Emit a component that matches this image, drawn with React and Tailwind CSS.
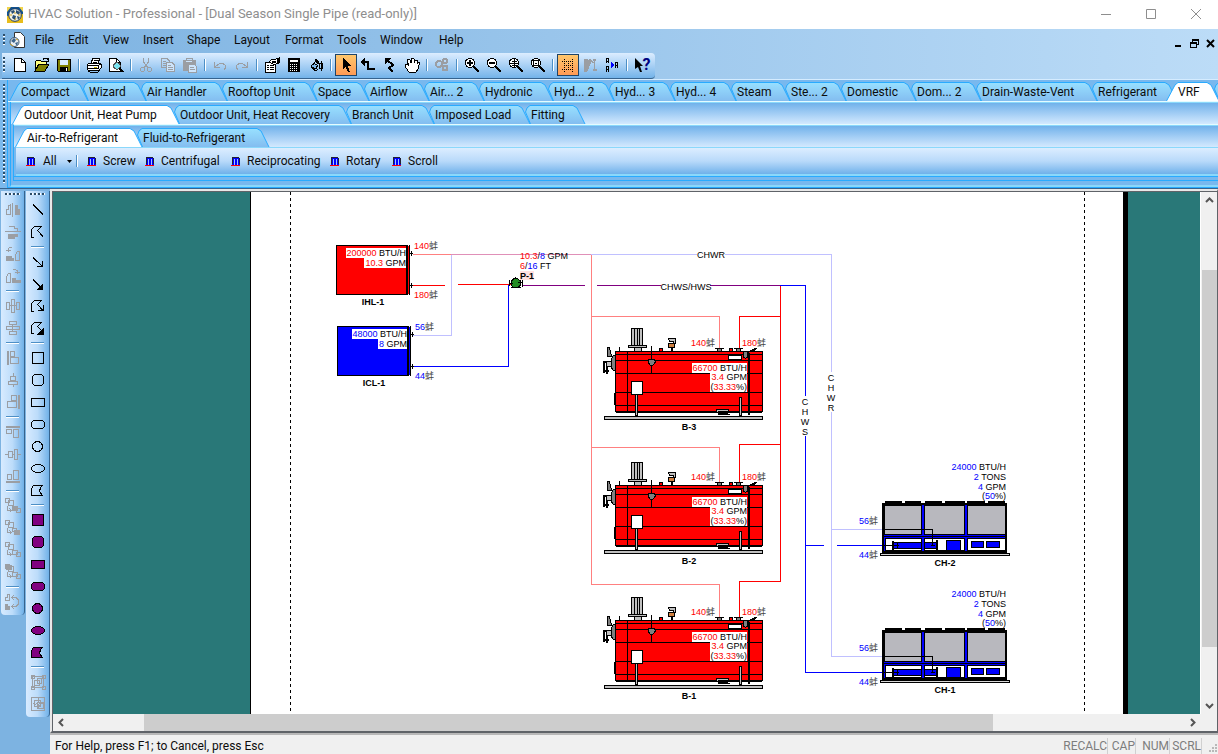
import { Fragment } from 'react';
import clsx from 'clsx';

const MENUS = [
    { label: 'File', width: 33 },
    { label: 'Edit', width: 35 },
    { label: 'View', width: 40 },
    { label: 'Insert', width: 44 },
    { label: 'Shape', width: 47 },
    { label: 'Layout', width: 51 },
    { label: 'Format', width: 52 },
    { label: 'Tools', width: 43 },
    { label: 'Window', width: 59 },
    { label: 'Help', width: 40 },
];

const CATEGORY_TABS = [
    { label: 'Compact', width: 68 },
    { label: 'Wizard', width: 58 },
    { label: 'Air Handler', width: 81 },
    { label: 'Rooftop Unit', width: 90 },
    { label: 'Space', width: 52 },
    { label: 'Airflow', width: 60 },
    { label: 'Air... 2', width: 55 },
    { label: 'Hydronic', width: 69 },
    { label: 'Hyd... 2', width: 61 },
    { label: 'Hyd... 3', width: 61 },
    { label: 'Hyd... 4', width: 61 },
    { label: 'Steam', width: 54 },
    { label: 'Ste... 2', width: 56 },
    { label: 'Domestic', width: 70 },
    { label: 'Dom... 2', width: 65 },
    { label: 'Drain-Waste-Vent', width: 116 },
    { label: 'Refrigerant', width: 80 },
    { label: 'VRF', width: 42, active: true },
];

const UNIT_TABS = [
    { label: 'Outdoor Unit, Heat Pump', width: 156, active: true },
    { label: 'Outdoor Unit, Heat Recovery', width: 172 },
    { label: 'Branch Unit', width: 83 },
    { label: 'Imposed Load', width: 96 },
    { label: 'Fitting', width: 55 },
];

const TYPE_TABS = [
    { label: 'Air-to-Refrigerant', width: 116, active: true },
    { label: 'Fluid-to-Refrigerant', width: 127 },
];

const COMPRESSORS = [
    { label: 'Screw', width: 58 },
    { label: 'Centrifugal', width: 86 },
    { label: 'Reciprocating', width: 99 },
    { label: 'Rotary', width: 62 },
    { label: 'Scroll', width: 60 },
];

// 16x16 pixel icon
const Icon = ({ children }) => (
    <svg width="16" height="16" viewBox="0 0 16 16" fill="none" stroke="currentColor" shapeRendering="crispEdges" aria-hidden="true">
        {children}
    </svg>
);

const GlobeIcon = ({ size = 16 }) => (
    <svg width={size} height={size} viewBox="0 0 16 16" aria-hidden="true">
        <path d="M0 0H16V7L0 9Z" fill="#12518f" />
        <path d="M0 9L16 7V16H0Z" fill="#e8bd1c" />
        <path d="M0 0h4L0 5zM12 0h4v5z" fill="#f1d34b" />
        <circle cx="8" cy="8" r="6.3" fill="#f2f2e8" stroke="#18395e" />
        <path d="M4 4l3-1 1 2-3 2zM9 3l4 2-1 3-3-2zM6 8l3 1-1 4-3-2zM10 9l3 1-2 3z" fill="#2b4f74" />
        <path d="M2 8h3M7 6h2M11 8h3M8 13l1-2" stroke="#d4a724" />
    </svg>
);

const ICONS = {
    new: <><path d="M2.500 1.500H9.500L13.500 5.500V14.500H2.500Z" fill="#fff" /><path d="M9.500 1.500V5.500H13.500" /></>,
    open: <><path d="M1 13V4h1l1-1h3l1 1h5v3H5l-4 6" fill="#ffff80" /><path d="M1 14L5 7H15L11 14Z" fill="#808000" /><path d="M9 2.500L10.500 1H12.500L14.500 3.500M14.500 1V4H12" /></>,
    save: <><path d="M1.500 2.500H14.500V14.500H2.500L1.500 13.500Z" fill="#808000" /><path d="M4 3H12V8H4Z" fill="#d8ebff" stroke="none" /><path d="M4 10H12V15H4Z" fill="#000" stroke="none" /><path d="M10 11h1v3h-1z" fill="#fff" stroke="none" /></>,
    print: <><path d="M5 6L7 1H14L12 6" fill="#fff" /><path d="M7.500 3.500H12M6.500 5H11" /><path d="M1 8L3 6H14L15 7V11L13 13H2L1 12Z" fill="#fff" /><path d="M1 8.500H12L15 7M1 11H12.500V8.500M2 13.500L4 15H12L14.500 11.500" /><path d="M8 10h3" stroke="#c8b400" /></>,
    preview: <><path d="M1.500 1.500H8.500L12.500 5.500V14.500H1.500Z" fill="#fff" /><path d="M8.500 1.500V5.500H12.500" /><circle cx="9" cy="9" r="3.200" fill="#7be4f0" stroke="#555" /><path d="M11.500 11.500L15.500 15" strokeWidth="2" /></>,
    cut: <><path d="M5.500 1V5L10 11M10.500 1V5L6 11" /><circle cx="4.500" cy="12.500" r="2" /><circle cx="11.500" cy="12.500" r="2" /></>,
    copy: <><path d="M1.500 1.500H7L9.500 4V10.500H1.500Z" /><path d="M3 4.500H6M3 6.500H6M3 8.500H6" /><path d="M6.500 5.500H12L14.500 8V14.500H6.500Z" fill="#cde4fb" /><path d="M8 8.500H11M8 10.500H13M8 12.500H13" /></>,
    paste: <><path d="M1 3H13V13H1Z" fill="currentColor" /><path d="M4 3V1.500H10V3" /><path d="M4 4.500H10" stroke="#cde4fb" /><path d="M6.500 7.500H12.500L14.500 9.500V15.500H6.500Z" fill="#cde4fb" /><path d="M8 10.500H12M8 12.500H13" /></>,
    undo: <><path d="M2.500 5V10.500H8M3 10L6 7.500L8 6.500H11L13.500 8.500V11L12 12.500" /></>,
    redo: <><path d="M13.500 5V10.500H8M13 10L10 7.500L8 6.500H5L2.500 8.500V11L4 12.500" /></>,
    props: <><path d="M1.500 5.500H11.500V15.500H1.500Z" fill="#fff" /><path d="M3 8.500H5M6 8.500H10M3 10.500H5M6 10.500H10M3 12.500H5M6 12.500H10" /><path d="M5 5L8 2H12L15 1V6L12 7H9L7 6Z" fill="#fff" /><path d="M8 4.500H12M14 1V7" strokeWidth="2" /></>,
    calc: <><path d="M2 1H14V15H2Z" fill="#000" stroke="none" /><path d="M4 3H12V5H4Z" fill="#fff" stroke="none" /><path d="M4 7.500H12M4 9.500H12M4 11.500H12M4 13.500H12" stroke="#fff" strokeDasharray="1 1" /></>,
    rotate: <><path d="M3.500 8.500L6 6.500L9.500 8.500L8 11.500L4 10.500Z" fill="#7db8ec" /><path d="M7.500 2L10.500 5M6 6L9 3M4 11L8 14L10 12" /><path d="M7 2.500L11 7" strokeWidth="2" /><path d="M11.500 6.500H14.500V11.500H11.500ZM13 4V14" /></>,
    pointer: <path d="M5 1V12L7.500 9.500L10 15H12L9.500 9H13Z" fill="#000" stroke="none" />,
    connector: <><path d="M2 5H8V11.500H15" strokeWidth="2" /><path d="M0 5L5 1V9Z" fill="#000" stroke="none" /></>,
    zigzag: <><path d="M11 14.500L7 11L11 8L5 3" strokeWidth="2" /><path d="M3 1H9L3 7Z" fill="#000" stroke="none" /></>,
    hand: <><path d="M4 14L1 9L1 7L3 7L5 9L3 4L4 2L6 3L7 6V2L9 1L10 2V6L11 3L13 3V7L14 5L15.500 6L14 12L12 15H5Z" fill="#fff" /></>,
    gears: <><circle cx="5" cy="7" r="3" strokeWidth="2" /><circle cx="11" cy="4" r="2" strokeWidth="2" /><circle cx="11" cy="11" r="2.500" strokeWidth="2" /></>,
    zoomIn: <><circle cx="6" cy="6" r="4.700" fill="#fff" /><path d="M3 6H9M6 3V9" strokeWidth="2" /><path d="M10 10L15 15" strokeWidth="2.500" /></>,
    zoomOut: <><circle cx="6" cy="6" r="4.700" fill="#fff" /><path d="M3 6H9" strokeWidth="2" /><path d="M10 10L15 15" strokeWidth="2.500" /></>,
    zoomPage: <><circle cx="6" cy="6" r="4.700" fill="#fff" /><path d="M1.500 6.500H11M6.500 1.500V11M4 4.500H9M4 8.500H9" /><path d="M10 10L15 15" strokeWidth="2.500" /></>,
    zoomFit: <><circle cx="6" cy="6" r="4.700" fill="#fff" /><path d="M3.500 3.500H8.500V8.500H3.500ZM5 6H7" /><path d="M10 10L15 15" strokeWidth="2.500" /></>,
    grid: <path d="M2 4.500H14M2 12.500H14M4.500 2V15M12.500 2V15M4 8.500H13M8.500 4V13" stroke="#000" strokeDasharray="1 1" />,
    mirror: <><path d="M2 2H5V5L8 3V7L5 14H2Z" fill="currentColor" /><path d="M8 2L11 6M12.500 3V14M10.500 3H14M11 13H15" strokeWidth="1.500" /></>,
    align: <><path d="M2.500 2V6M4.500 2V6M2 1.500H5M2 4.500H5M2.500 10V15M4.500 10V15M2 9.500H5M2 12.500H5M11.500 6V11M13.500 6V11M11 5.500H14M11 8.500H14" /><path d="M7 5L11 8L7 11Z" fill="#0000ff" stroke="none" /></>,
    help: <path d="M1 1V12L4 10L6 15H8L6 9H9Z" fill="#000" stroke="none" />,
};

const MAIN_TOOLS = [
    [['new', 'New'], ['open', 'Open'], ['save', 'Save']],
    [['print', 'Print'], ['preview', 'Print Preview']],
    [['cut', 'Cut', 'off'], ['copy', 'Copy', 'off'], ['paste', 'Paste', 'off']],
    [['undo', 'Undo', 'off'], ['redo', 'Redo', 'off']],
    [['props', 'Properties'], ['calc', 'Calculate'], ['rotate', 'Rotate']],
    [['pointer', 'Select', 'on'], ['connector', 'Connector'], ['zigzag', 'Direct Connector'], ['hand', 'Pan']],
    [['gears', 'Options', 'off']],
    [['zoomIn', 'Zoom In'], ['zoomOut', 'Zoom Out'], ['zoomPage', 'Zoom Page'], ['zoomFit', 'Zoom Fit']],
    [['grid', 'Grid', 'on'], ['mirror', 'Mirror', 'off'], ['align', 'Sequence']],
    [['help', 'Context Help']],
];

const STACK = <path d="M0.500 0.500H4.500V4.500H0.500ZM3.500 2.500H8.500V7.500H3.500Z" />;
const STACK_ARROW = <path d="M2.500 8V12.500H6M4.500 10.500L6.500 12.500L4.500 14.500" />;

const ARRANGE_TOOLS = [
    [
        ['Flip Horizontal', <><path d="M7.500 1V15" /><path d="M10 3H12V7H14V12H10Z" fill="currentColor" /><path d="M5.500 3V12.500H1.500V7.500H3.500V3.500Z" /></>],
        ['Flip Vertical', <><path d="M0 7.500H16M3.500 2.500H9V4.500H12V7" /><path d="M3 10H12V12H9V14H3Z" fill="currentColor" /></>],
        ['Rotate Left', <><path d="M7 1H5L3.500 3V6M1 4.500H6" /><path d="M1 10H6V12H8V14H1Z" fill="currentColor" /><path d="M10.500 14.500V8.500L12.500 5.500H14.500V14.500Z" /></>],
        ['Rotate Right', <><path d="M8 1H10L12.500 3V6M10 4.500H15" /><path d="M7 10H10V12H15V14H7Z" fill="currentColor" /><path d="M1.500 14.500V8.500L3.500 5.500H5.500V14.500Z" /></>],
    ],
    [
        ['Space Across', <path d="M1.500 4.500H4.500V11.500H1.500ZM6.500 1.500H9.500V14.500H6.500ZM11.500 4.500H14.500V11.500H11.500ZM4 7.500H12" />],
        ['Space Down', <path d="M4.500 1.500H11.500V4.500H4.500ZM1.500 6.500H14.500V9.500H1.500ZM4.500 11.500H11.500V14.500H4.500ZM7.500 4V12" />],
    ],
    [
        ['Align Left', <><path d="M3 1V15" strokeWidth="2" /><path d="M5.500 1.500H9.500V6.500H5.500ZM5.500 7.500H13.500V13.500H5.500Z" /></>],
        ['Align Center', <path d="M8.500 1V4M5.500 4.500H10.500V8.500H5.500ZM3.500 9.500H12.500V12.500H3.500ZM8.500 12V15" />],
        ['Align Right', <><path d="M14 1V15" strokeWidth="2" /><path d="M6.500 1.500H11.500V6.500H6.500ZM2.500 7.500H11.500V13.500H2.500Z" /></>],
    ],
    [
        ['Align Top', <><path d="M1 3H15" strokeWidth="2" /><path d="M1.500 5.500H6.500V9.500H1.500ZM8.500 5.500H13.500V13.500H8.500Z" /></>],
        ['Align Middle', <path d="M0 8.500H3M3.500 5.500H7.500V11.500H3.500ZM9.500 3.500H12.500V13.500H9.500ZM7 8.500H9M13 8.500H16" />],
        ['Align Bottom', <><path d="M1 14H15" strokeWidth="2" /><path d="M2.500 6.500H6.500V11.500H2.500ZM8.500 2.500H13.500V11.500H8.500Z" /></>],
    ],
    [
        ['Bring to Front', <>{STACK}{STACK_ARROW}<path d="M7.500 8.500H12.500V12.500H7.500Z" fill="currentColor" /><path d="M11.500 10.500H15.500V14.500H11.500Z" /></>],
        ['Send to Back', <>{STACK}{STACK_ARROW}<path d="M7.500 8.500H11.500V11.500H7.500Z" /><path d="M9.500 10.500H14.500V14.500H9.500Z" fill="currentColor" /></>],
        ['Bring Forward', <>{STACK}{STACK_ARROW}<path d="M7.500 8.500H12.500V12.500H7.500ZM11.500 10.500H15.500V14.500H11.500Z" /></>],
        ['Send Backward', <>{STACK}{STACK_ARROW}<path d="M1.500 1.500H6.500V5.500H1.500Z" fill="currentColor" /><path d="M7.500 8.500H12.500V12.500H7.500ZM11.500 10.500H15.500V14.500H11.500Z" /></>],
    ],
    [['Swap', <><path d="M0.500 6.500V3.500H2.500V0.500H4.500V6.500Z" /><path d="M0.500 10.500H2.500V12.500H4.500V15H0.500Z" fill="currentColor" /><path d="M7 3.500H11L13.500 6V10L11 12.500H7M9 1L7 3.500L9 6M9 10L7 12.500L9 15" /></>]],
];

const POLY = 'M1.500 13.500V5.500L4.500 2.500H11.500L7.500 6.500';

// The same outlines appear twice on the bar: first hollow, then filled
const shapeTools = (fill) => [
    ['Square', <path d="M2.500 2.500H13.500V13.500H2.500Z" fill={fill} />],
    ['Rounded Square', <path d="M4.500 2.500H11.500L13.500 4.500V11.500L11.500 13.500H4.500L2.500 11.500V4.500Z" fill={fill} />],
    ['Rectangle', <path d="M1.500 4.500H14.500V12.500H1.500Z" fill={fill} />],
    ['Rounded Rectangle', <path d="M3.500 4.500H12.500L14.500 6.500V10.500L12.500 12.500H3.500L1.500 10.500V6.500Z" fill={fill} />],
    ['Circle', <circle cx="7.500" cy="8.500" r="5" fill={fill} />],
    ['Ellipse', <ellipse cx="8" cy="8.500" rx="6.500" ry="4" fill={fill} />],
    ['Closed Curve', <path d="M1.500 13.500V6.500L3.500 3.500H12.500L10.500 5.500L9.500 9.500L12.500 13.500Z" fill={fill} />],
];

const DRAW_TOOLS = [
    [
        ['Line', <path d="M3 2.500L13 12.500" />],
        ['Polyline', <path d={`${POLY}L13 12.500M1.500 13.500H4`} />],
    ],
    [
        ['Arrow', <path d="M3 3.500L12.500 12.500M7 12.500H12.500V7" />],
        ['Filled Arrow', <><path d="M3 3.500L11 11.500" /><path d="M13 7V14H6Z" fill="#000" stroke="none" /></>],
        ['Polyline Arrow', <path d={`${POLY}L13 12.500M1.500 13.500H4M8 12.500H13V7`} />],
        ['Filled Polyline Arrow', <><path d={`${POLY}L12 11M1.500 13.500H4`} /><path d="M14 7V15H6Z" fill="#000" stroke="none" /></>],
    ],
    shapeTools('none'),
    shapeTools('#800080'),
    [
        ['Group', <path d="M2.500 2.500H13.500V13.500H2.500ZM4.500 6.500H9.500V11.500H4.500ZM7.500 4.500H11.500V9.500H7.500ZM1 1H4V4H1ZM12 1H15V4H12ZM1 12H4V15H1ZM12 12H15V15H12Z" />, 'off'],
        ['Ungroup', <><path d="M1.500 1.500H14.500V14.500H1.500ZM4 4H10V10H4ZM7 6H13V12H7ZM4 10L10 4M7 12L13 6" /><path d="M3 7H13M8 2V14" strokeDasharray="2 1" /></>, 'off'],
    ],
];

const Separator = ({ vertical }) =>
    vertical ? (
        <div className="mx-auto my-[3px] h-0.5 w-[13px] border-t border-b border-t-[#4d8fc6] border-b-white" />
    ) : (
        <div className="mx-[3px] h-3 w-0.5 shrink-0 border-r border-l border-r-white border-l-[#4d8fc6]" />
    );

const ToolButton = ({ label, state, children }) => (
    <button
        type="button"
        aria-label={label}
        disabled={state === 'off'}
        className={clsx(
            'flex size-[22px] shrink-0 items-center justify-center',
            state === 'off' ? 'text-[#9b9ea3]' : 'text-black',
            state === 'on' && 'border border-[#1e4468] bg-linear-to-b from-[#ffc76c] to-[#ff9a55]',
        )}
    >
        {children}
    </button>
);

const SideToolbar = ({ groups, allOff, name }) => (
    <div
        role="toolbar"
        aria-label={name}
        className="flex w-6 flex-col items-center self-start rounded-b border-r border-[#36638e] bg-linear-to-r from-[#d8ebff] via-[#bcdcfa] to-[#70b1e8] pb-0.5"
    >
        <div className="mt-0.5 mb-1 h-0.5 w-[15px] bg-[repeating-linear-gradient(90deg,#2b4c68_0_2px,#fff_2px_3px,transparent_3px_4px)]" />
        {groups.map((group, i) => (
            <Fragment key={i}>
                {i > 0 && <Separator vertical />}
                {group.map(([label, icon, state]) => (
                    <ToolButton key={label} label={label} state={allOff ? 'off' : state}>
                        <Icon>{icon}</Icon>
                    </ToolButton>
                ))}
            </Fragment>
        ))}
    </div>
);

// Slanted tab. The feet of neighbouring tabs overlap, so the outline is wider than the button.
const Tab = ({ label, width, active, first }) => {
    const left = first || active ? 'M2.500 19L11 3L14 0.500' : 'M13.500 19L8.500 7L10 3L13 0.500';
    const outline = `${left}H${width + 1}L${width + 5} 3L${width + 13} 19`;
    return (
        <button
            type="button"
            role="tab"
            aria-selected={!!active}
            className={clsx('relative h-[19px] shrink-0 pl-1.5 text-left whitespace-nowrap', active && 'z-10')}
            style={{ width }}
        >
            <svg className="absolute top-0 -left-2" width={width + 15} height="19" aria-hidden="true">
                <path d={outline} fill={active ? '#fff' : 'url(#tabFill)'} stroke="#29abff" />
            </svg>
            <span className="relative">{label}</span>
        </button>
    );
};

const TabRow = ({ tabs, name, children }) => (
    <div role="tablist" aria-label={name} className="flex overflow-hidden pl-[7px]">
        {tabs.map((tab, i) => (
            <Tab key={tab.label} {...tab} first={i === 0} />
        ))}
        {children}
    </div>
);

const CompressorIcon = () => (
    <svg width="10" height="10" viewBox="0 0 10 10" shapeRendering="crispEdges" aria-hidden="true">
        <path d="M1 2H9V9H1Z" fill="#0000ff" />
        <path d="M1 1H8V2H1ZM1 2H2V8H1ZM8 2H9V8H8Z" fill="#223" />
        <path d="M3 3H4V9H3ZM6 3H7V9H6Z" fill="#9fc4ff" />
        <path d="M0 9H9V10H0Z" fill="#ff0000" />
    </svg>
);

const UNIT = '蚌';

const Temp = ({ x, y, color, children, anchor = 'start' }) => (
    <text x={x} y={y} fill={color} textAnchor={anchor}>
        {children}
        <tspan fill="#444">{UNIT}</tspan>
    </text>
);

// Right-aligned reading with a coloured value, e.g. "24000 BTU/H"
const Reading = ({ x, y, value, unit, color, box }) => (
    <>
        {box && <rect x={x - box} y={y - 8} width={box} height="10" fill="#fff" />}
        <text x={x} y={y} textAnchor="end" fill="#000">
            <tspan fill={color}>{value}</tspan> {unit}
        </text>
    </>
);

const Percent = ({ x, y, value, color, box }) => (
    <>
        {box && <rect x={x - box} y={y - 8} width={box} height="10" fill="#fff" />}
        <text x={x} y={y} textAnchor="end">
            (<tspan fill={color}>{value}</tspan>%)
        </text>
    </>
);

const Coil = ({ x, y, color, load, flow, boxes, name }) => (
    <g>
        <g shapeRendering="crispEdges" stroke="#000">
            <rect x={x + 0.5} y={y + 0.5} width="70" height="49" fill={color} />
            <path d={`M${x + 71.5} ${y}V${y + 50}M${x + 73.5} ${y}V${y + 50}`} />
            <path d={`M${x + 72.5} ${y + 1}V${y + 49}`} stroke={color} />
            <path d={`M${x + 74} ${y + 8.5}H${x + 77}M${x + 75.5} ${y + 6}V${y + 11}M${x + 74} ${y + 40.5}H${x + 77}M${x + 75.5} ${y + 38}V${y + 43}`} />
        </g>
        <Reading x={x + 70} y={y + 11} value={load} unit="BTU/H" color={color} box={boxes[0]} />
        <Reading x={x + 70} y={y + 21} value={flow} unit="GPM" color={color} box={boxes[1]} />
        <text x={x + 37} y={y + 60} textAnchor="middle" fontWeight="bold">{name}</text>
    </g>
);

const Boiler = ({ dy, name }) => (
    <g transform={`translate(0 ${dy})`}>
        <g shapeRendering="crispEdges" stroke="#000" fill="#c0c0c0">
            <rect x="604.500" y="416.500" width="158" height="3" />
            {/* stack */}
            <path d="M631.500 328.500H642.500V346H631.500ZM634.500 328V346M639.500 328V346M637.500 328V346" />
            <path d="M628.500 345.500H646.500V347.500H628.500Z" />
            <path d="M634.500 347.500H641.500V351H634.500Z" />
            {/* shell */}
            <rect x="615.500" y="351.500" width="147" height="60" fill="#ff0000" />
            <path d="M616 354.500H762M616 360.500H762M616 373.500H762M616 392.500H762M616 405.500H762M616 412.500H762M627.500 351V412" fill="none" />
            <path d="M619.500 347V351M614.500 393V405" />
            <path d="M749 353V415" strokeWidth="2" />
            <path d="M651.500 346V373" />
            <path d="M649 359.500H654L655.500 362L653 365H650L648 362Z" fill="#808080" />
            <rect x="728.500" y="355.500" width="13" height="4" fill="#fff" />
            <path d="M743.500 351.500H747.500V357L745.500 358.500L743.500 357Z" fill="#808080" />
            <path d="M747 353L751 350.500L757 348M751 351.500L756 349.500" fill="none" />
            {/* nozzles */}
            <path d="M715 348.500H724M717.500 349V351H721.500V349M734 348.500H743M736.500 349V351H740.500V349" fill="#808080" />
            <path d="M729 348H732V351H729ZM659 348H662V351H659Z" fill="#ff0000" />
            {/* relief valve */}
            <path d="M668.500 338.500H675.500V343.500H673.500V341.500H669.500Z" />
            <path d="M668.500 343.500H674.500V347.500H672.500V351H671V347.500H668.500Z" fill="#d08040" />
            {/* burner */}
            <path d="M607.500 347.500H609.500L611.500 356.500H607.500Z" fill="#808080" />
            <path d="M611.500 358.500L613.500 355.500H615V370.500H613.500L611.500 368Z" fill="#808080" />
            <path d="M606.500 361.500H611.500V366.500H606.500Z" />
            <path d="M604 361V373M603 361.500H606M604 370.500H609M606.500 367V374" strokeWidth="2" />
            {/* sight door and legs */}
            <rect x="631.500" y="381.500" width="11" height="13" fill="#fff" />
            <path d="M635.500 395V415.500H637.500V395M739.500 397V415.500H741.500V397Z" />
            <path d="M716.500 409.500H728.500V412.500H716.500ZM718 414H730" />
            <path d="M718 412H728" strokeWidth="3" />
        </g>
        <Reading x={747} y={371} value="66700" unit="BTU/H" color="#ff0000" box={55} />
        <Reading x={747} y={380} value="3.4" unit="GPM" color="#ff0000" box={37} />
        <Percent x={747} y={390} value="33.33" color="#ff0000" box={37} />
        <Temp x={691} y={346} color="#ff0000">140</Temp>
        <Temp x={742} y={346} color="#ff0000">180</Temp>
        <text x="689" y="430" textAnchor="middle" fontWeight="bold">{name}</text>
    </g>
);

const Chiller = ({ dy, name }) => (
    <g transform={`translate(0 ${dy})`}>
        <g shapeRendering="crispEdges" stroke="#000">
            <path d="M885 502H902M905 502H921M925 502H942M945 502H965M967 502H985M988 502H1005" strokeWidth="2" />
            <rect x="883" y="504" width="123" height="48" fill="#0000ff" strokeWidth="2" />
            <path d="M884.500 505.500H921.500V534.500H884.500ZM924.500 505.500H964.500V534.500H924.500ZM967.500 505.500H1005.500V534.500H967.500Z" fill="#b8b8be" />
            <path d="M883 536.500H1006" />
            <path d="M885.500 538.500H921.500V550.500H885.500ZM924.500 538.500H964.500V550.500H924.500ZM967.500 538.500H1005.500V550.500H967.500Z" fill="#fff" />
            <path d="M893.500 542.500H921.500V548.500H893.500ZM924.500 542.500H936.500V548.500H924.500ZM946.500 540.500H960.500V550.500H946.500ZM971.500 541.500H983.500V547.500H971.500ZM986.500 541.500H999.500V547.500H986.500Z" fill="#0000ff" />
            <path d="M893 541V550M937 540V550" strokeWidth="2" />
            <rect x="880.500" y="553.500" width="129" height="2" fill="#d8d8d8" />
            <path d="M883 529.500H932.500V546M883 545.500H899M897.500 543V548M931 545.500H935" fill="none" />
        </g>
        <Reading x={1006} y={470} value="24000" unit="BTU/H" color="#0000ff" />
        <Reading x={1006} y={480} value="2" unit="TONS" color="#0000ff" />
        <Reading x={1006} y={490} value="4" unit="GPM" color="#0000ff" />
        <Percent x={1006} y={499} value="50" color="#0000ff" />
        <Temp x={878} y={524} color="#0000ff" anchor="end">56</Temp>
        <Temp x={878} y={558} color="#0000ff" anchor="end">44</Temp>
        <text x="945" y="566" textAnchor="middle" fontWeight="bold">{name}</text>
    </g>
);

const VerticalLabel = ({ x, y, text }) => (
    <text textAnchor="middle">
        {text.split('').map((letter, i) => (
            <tspan key={i} x={x} y={y + i * 10}>{letter}</tspan>
        ))}
    </text>
);

const Schematic = () => (
    <svg
        className="block shrink-0 font-['Liberation_Sans','Noto_Sans_CJK_TC',sans-serif] text-[9px]"
        width="873"
        height="523"
        viewBox="250 192 873 523"
        role="img"
        aria-label="Dual season single pipe schematic"
    >
        <g fill="none" shapeRendering="crispEdges">
            <path d="M250.500 192V715" stroke="#000" />
            <path d="M290.500 192V715M1084.500 192V715" stroke="#000" strokeDasharray="3 3" />
            {/* hot water return */}
            <path d="M413 254.500H451M591.500 255V584.500M591 316.500H719.500V348M591 447.500H719.500V482M591 584.500H719.500V617" stroke="#ff8080" />
            {/* chilled water return */}
            <path d="M591 254.500H697M725 254.500H831.500V372M831.500 412V656.500H883M831 529.500H883M451.500 255V335.500H413" stroke="#c0c0ff" />
            <path d="M451 254.500H591" stroke="#e090b8" />
            {/* hot water supply */}
            <path d="M413 285.500H445M458 284.500H511M780.500 286V581.500H739.500V617M780 444.500H739.500V482M780 316.500H739.500V348" stroke="#ff0000" />
            {/* shared supply */}
            <path d="M522 285.500H585M597 285.500H661M710 285.500H780" stroke="#800080" />
            {/* chilled water supply */}
            <path d="M413 366.500H508.500V285M780 285.500H805.500V396M805.500 436V672.500H883M805 545.500H824M837 545.500H883" stroke="#0000ff" />
        </g>

        <Coil x={336} y={245} color="#ff0000" load="200000" flow="10.3" boxes={[60, 42]} name="IHL-1" />
        <Coil x={337} y={326} color="#0000ff" load="48000" flow="8" boxes={[55, 29]} name="ICL-1" />
        <Temp x={414} y={249} color="#ff0000">140</Temp>
        <Temp x={414} y={298} color="#ff0000">180</Temp>
        <Temp x={415} y={330} color="#0000ff">56</Temp>
        <Temp x={415} y={379} color="#0000ff">44</Temp>

        <g shapeRendering="crispEdges">
            <path d="M514 278.500H517L520.500 281V285L518 287.500H513L511.500 285V281Z" fill="#228b22" stroke="#000" />
            <path d="M509.500 280V286M510 283.500H513M522.500 280V287M518 282.500H522M511 287.500H521M515 277V279" stroke="#000" />
        </g>
        <text x="520" y="259" fill="#ff0000">10.3<tspan fill="#000">/</tspan><tspan fill="#0000ff">8</tspan><tspan fill="#000"> GPM</tspan></text>
        <text x="520" y="269" fill="#ff0000">6<tspan fill="#000">/</tspan><tspan fill="#0000ff">16</tspan><tspan fill="#000"> FT</tspan></text>
        <rect x="520" y="271" width="14" height="9" fill="#ffe0e0" />
        <text x="520" y="279" fontWeight="bold">P-1</text>

        <text x="711" y="258" textAnchor="middle">CHWR</text>
        <text x="686" y="290" textAnchor="middle">CHWS/HWS</text>
        <VerticalLabel x={831} y={381} text="CHWR" />
        <VerticalLabel x={805} y={405} text="CHWS" />

        <Boiler dy={0} name="B-3" />
        <Boiler dy={134} name="B-2" />
        <Boiler dy={269} name="B-1" />
        <Chiller dy={0} name="CH-2" />
        <Chiller dy={127} name="CH-1" />
    </svg>
);

const ScrollArrow = ({ label, d }) => (
    <button type="button" aria-label={label} className="flex size-[17px] shrink-0 items-center justify-center">
        <svg width="9" height="9" viewBox="0 0 9 9" fill="none" stroke="#555" strokeWidth="2" aria-hidden="true">
            <path d={d} />
        </svg>
    </button>
);

const TitleBar = () => (
    <header className="flex h-[29px] items-center bg-white pl-[7px] text-[#8e8e8e]">
        <GlobeIcon />
        <h1 className="ml-[5px] flex-1 pb-0.5 text-[13px] whitespace-nowrap">HVAC Solution - Professional - [Dual Season Single Pipe (read-only)]</h1>
        <button type="button" aria-label="Minimize" className="flex h-full w-[45px] items-center justify-center pb-0.5">
            <svg width="10" height="10" stroke="#8e8e8e" fill="none"><path d="M0 5.500H10" /></svg>
        </button>
        <button type="button" aria-label="Maximize" className="flex h-full w-[45px] items-center justify-center pb-0.5">
            <svg width="10" height="10" stroke="#8e8e8e" fill="none"><path d="M0.500 0.500H9.500V9.500H0.500Z" /></svg>
        </button>
        <button type="button" aria-label="Close" className="flex h-full w-[45px] items-center justify-center pb-0.5">
            <svg width="10" height="10" stroke="#8e8e8e" fill="none"><path d="M0 0L10 10M10 0L0 10" /></svg>
        </button>
    </header>
);

const MenuBar = () => (
    <div className="flex h-6 items-center pb-0.5 pl-[3px]">
        <div className="h-3 w-0.5 bg-[repeating-linear-gradient(180deg,#2b4c68_0_2px,#fff_2px_3px,transparent_3px_4px)]" />
        <svg className="ml-1 shrink-0" width="17" height="16" viewBox="0 0 17 16" aria-hidden="true">
            <path d="M5.500 0.500H11.500L15.500 4.500V15.500H5.500Z" fill="#fff" stroke="#333" />
            <circle cx="5.500" cy="10" r="4.500" fill="#e8eef2" stroke="#37536e" />
            <path d="M2 9l3-3 2 2-2 3zM6 11l3-1-1 4z" fill="#3c638a" />
            <path d="M1 12l3 2M7 7l2 1" stroke="#d0a020" />
        </svg>
        <nav aria-label="Main menu" className="ml-[9px] flex flex-1">
            {MENUS.map((menu) => (
                <button key={menu.label} type="button" className="text-left whitespace-nowrap" style={{ width: menu.width }}>
                    {menu.label}
                </button>
            ))}
        </nav>
        <div className="flex pt-1.5 text-black">
            <button type="button" aria-label="Minimize document" className="flex w-[17px] justify-center">
                <svg width="8" height="9" stroke="#000" strokeWidth="2"><path d="M1 7H7" /></svg>
            </button>
            <button type="button" aria-label="Restore document" className="flex w-[17px] justify-center">
                <svg width="9" height="9" stroke="#000" fill="none" shapeRendering="crispEdges"><path d="M2.500 3V0.500H8.500V5.500H6M2 1.500H9M0.500 3.500H6.500V8.500H0.500ZM0 4.500H7" /></svg>
            </button>
            <button type="button" aria-label="Close document" className="flex w-[15px] justify-center">
                <svg width="9" height="9" stroke="#000" strokeWidth="2"><path d="M1 1L8 8M8 1L1 8" /></svg>
            </button>
        </div>
    </div>
);

const MainToolbar = () => (
    <div role="toolbar" aria-label="Standard" className="ml-0.5 flex h-[26px] w-[653px] items-center rounded-r border-b border-[#36638e] bg-linear-to-b from-[#dcedff] to-[#73b3e9] pb-px pl-px">
        <div className="mr-1 h-4 w-0.5 bg-[repeating-linear-gradient(180deg,#2b4c68_0_2px,#fff_2px_3px,transparent_3px_4px)]" />
        {MAIN_TOOLS.map((group, i) => (
            <Fragment key={i}>
                {i > 0 && <Separator />}
                {group.map(([icon, label, state]) => (
                    <ToolButton key={icon} label={label} state={state}>
                        {icon === 'help' ? (
                            <>
                                <svg width="9" height="16" aria-hidden="true">{ICONS.help}</svg>
                                <span className="text-base leading-4 font-bold text-[#000080]">?</span>
                            </>
                        ) : (
                            <Icon>{ICONS[icon]}</Icon>
                        )}
                    </ToolButton>
                ))}
            </Fragment>
        ))}
    </div>
);

const ComponentDock = () => (
    <section aria-label="Components" className="flex border-t border-b border-t-[#d5ecff] border-b-[#36638e] bg-[#7cb9ec]">
        <div className="my-1 mr-0.5 ml-[3px] w-0.5 bg-[repeating-linear-gradient(180deg,#2b4c68_0_2px,#fff_2px_3px,transparent_3px_4px)]" />
        <div className="min-w-0 flex-1 border-b border-l border-[#29abff] bg-[#78b8ee] pt-0.5">
            <TabRow tabs={CATEGORY_TABS} name="Category">
                <Tab label="" width={90} />
            </TabRow>
            <div className="border-t border-[#e4fbff]">
                <div className="ml-0.5 border-b-2 border-l border-b-[#8ad8fb] border-l-[#29abff]">
                    <div className="border-t border-[#8ad8fb] bg-linear-to-b from-[#70b1ea] to-[#d3e9fe] pt-0.5">
                        <TabRow tabs={UNIT_TABS} name="Unit" />
                    </div>
                    <div className="mb-1 ml-0.5 border-t border-b border-l border-t-[#e4fbff] border-b-[#29abff] border-l-[#29abff]">
                        <div className="border-t border-[#8ad8fb] bg-linear-to-b from-[#70b1ea] to-[#d3e9fe] pt-0.5">
                            <TabRow tabs={TYPE_TABS} name="Type" />
                        </div>
                        <div className="mb-[3px] border-b border-[#29abff]">
                            <div className="ml-0.5 flex h-[29px] items-center border-t border-b-2 border-[#8ad8fb] bg-linear-to-b from-[#dcedff] via-[#b9dafa] to-[#6fb1ea] pl-2.5">
                                <button type="button" className="flex w-[46px] items-center">
                                    <CompressorIcon />
                                    <span className="ml-[7px] flex-1 text-left">All</span>
                                    <svg width="5" height="3" aria-hidden="true"><path d="M0 0H5L2.500 3Z" /></svg>
                                </button>
                                <div className="mr-[9px] ml-1 h-3 w-0.5 border-r border-l border-r-white border-l-[#4d8fc6]" />
                                {COMPRESSORS.map((item) => (
                                    <button key={item.label} type="button" className="flex items-center gap-1.5" style={{ width: item.width }}>
                                        <CompressorIcon />
                                        {item.label}
                                    </button>
                                ))}
                            </div>
                        </div>
                    </div>
                </div>
            </div>
        </div>
    </section>
);

const Workspace = () => (
    <div className="flex min-h-0 flex-1 flex-col border-2 border-r border-[#5f6368] border-t-[#e8e8e8] border-l-[#e8e8e8]">
        <div className="flex min-h-0 flex-1 border-t border-l border-[#5f6368]">
            <main className="flex min-w-0 flex-1 flex-col">
                <div className="min-h-0 flex-1 overflow-hidden border-r border-white bg-[#297878] pl-[197px]">
                    <div className="h-full w-[878px] border-r-[5px] border-black bg-white">
                        <Schematic />
                    </div>
                </div>
                <div className="flex h-[17px] bg-[#f0f0f0]">
                    <ScrollArrow label="Scroll left" d="M6 1L2.500 4.500L6 8" />
                    <div className="flex-[74]" />
                    <div className="flex-[847] bg-[#cdcdcd]" />
                    <div className="flex-[191]" />
                    <ScrollArrow label="Scroll right" d="M3 1L6.500 4.500L3 8" />
                </div>
            </main>
            <div className="flex w-4 flex-col items-center bg-[#f0f0f0] pb-[17px]">
                <ScrollArrow label="Scroll up" d="M1 6L4.500 2.500L8 6" />
                <div className="flex-[61]" />
                <div className="w-[15px] flex-[378] bg-[#cdcdcd]" />
                <div className="flex-[50]" />
                <ScrollArrow label="Scroll down" d="M1 3L4.500 6.500L8 3" />
            </div>
        </div>
    </div>
);

const StatusBar = () => (
    <footer className="flex h-[21px] items-center border-t-2 border-[#b8b8b8] bg-[#f0f0f0] pt-0.5 pl-[5px]">
        <p className="flex-1">For Help, press F1; to Cancel, press Esc</p>
        <ul className="flex text-right text-[#7d7d7d]">
            <li className="w-[46px] border-r border-[#d0d0d0]">RECALC</li>
            <li className="w-7 border-r border-[#d0d0d0]">CAP</li>
            <li className="w-[34px] border-r border-[#d0d0d0]">NUM</li>
            <li className="w-8 border-r border-[#d0d0d0]">SCRL</li>
        </ul>
        <svg className="ml-[7px] self-end" width="9" height="10" fill="#b8b8b8" aria-hidden="true">
            <path d="M6 0h2v2h-2zM6 3h2v2h-2zM3 3h2v2h-2zM6 6h2v2h-2zM3 6h2v2h-2zM0 6h2v2h-2z" />
        </svg>
    </footer>
);

export default function App() {
    return (
        <div className="flex h-screen flex-col overflow-hidden bg-[#7db3e1] font-['Roboto',sans-serif] text-xs text-[#0c0c0c]">
            {/* shared gradient for every inactive tab */}
            <svg width="0" height="0" className="absolute" aria-hidden="true">
                <defs>
                    <linearGradient id="tabFill" x1="0" y1="0" x2="0" y2="1">
                        <stop offset="0" stopColor="#98e0ff" />
                        <stop offset="1" stopColor="#83bdf0" />
                    </linearGradient>
                </defs>
            </svg>
            <TitleBar />
            <div className="bg-linear-to-r from-[#7cb2e1] to-[#bcdcf7]">
                <MenuBar />
                <MainToolbar />
            </div>
            <ComponentDock />
            <div className="flex min-h-0 flex-1">
                <div className="flex gap-px pt-0.5 pl-px">
                    <SideToolbar groups={ARRANGE_TOOLS} name="Arrange" allOff />
                    <SideToolbar groups={DRAW_TOOLS} name="Draw" />
                </div>
                <div className="flex min-w-0 flex-1 flex-col">
                    <Workspace />
                    <StatusBar />
                </div>
            </div>
        </div>
    );
}
